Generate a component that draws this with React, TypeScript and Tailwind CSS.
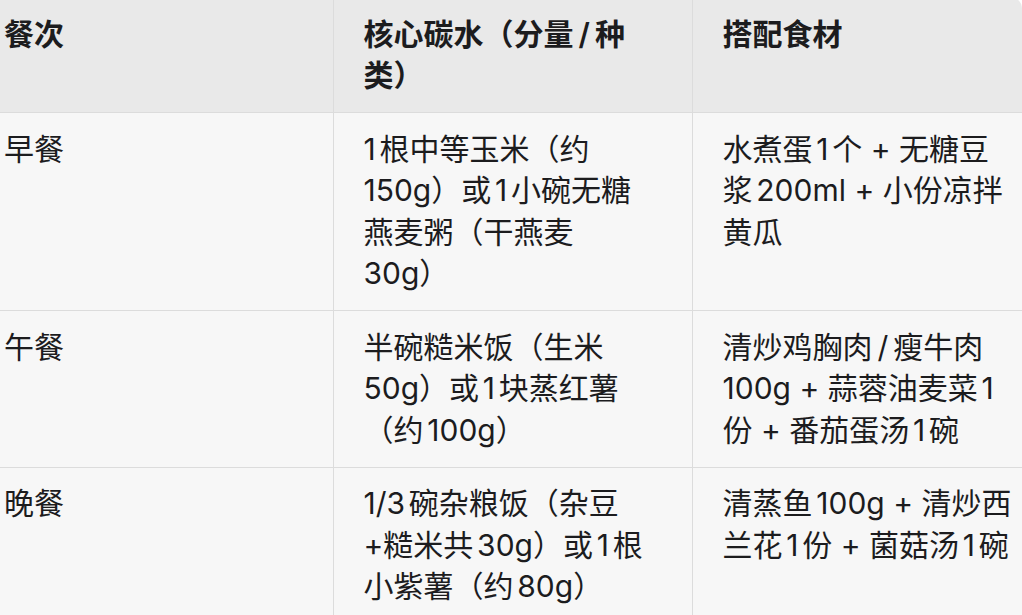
import { Fragment } from 'react';

const rows = [
  {
    meal: '早餐',
    carb: '1根中等玉米（约150g）或1小碗无糖燕麦粥（干燕麦30g）',
    side: '水煮蛋1个 + 无糖豆浆200ml + 小份凉拌黄瓜',
  },
  {
    meal: '午餐',
    carb: '半碗糙米饭（生米50g）或1块蒸红薯（约100g）',
    side: '清炒鸡胸肉/瘦牛肉100g + 蒜蓉油麦菜1份 + 番茄蛋汤1碗',
  },
  {
    meal: '晚餐',
    carb: '1/3碗杂粮饭（杂豆+糙米共30g）或1根小紫薯（约80g）',
    side: '清蒸鱼100g + 清炒西兰花1份 + 菌菇汤1碗',
  },
];

// slash between two hanzi gets a bit of breathing room, like the source font
function Txt({ s }: { s: string }) {
  const parts = s.split(/(?<=[\u4e00-\u9fff])\/(?=[\u4e00-\u9fff])/);
  return (
    <>
      {parts.map((p, i) => (
        <Fragment key={i}>
          {i > 0 && <span className="px-[5px]">/</span>}
          {p}
        </Fragment>
      ))}
    </>
  );
}

const cell = 'align-top pl-[30px] py-[15.5px] text-left';

export default function App() {
  return (
    <div className="min-h-[615px] w-[1022px] overflow-hidden bg-white">
      <div
        className="-mt-[2px] -ml-[26px] w-[1048px] overflow-hidden rounded-tr-[10px] bg-[#f7f7f7] text-[30px] leading-[41.5px] text-[#1c1c1e] [text-autospace:normal] [text-spacing-trim:space-all]"
        style={{ fontFamily: 'Inter, "Noto Sans CJK SC", sans-serif' }}
      >
        <table className="w-[1048px] table-fixed border-collapse">
          <colgroup>
            <col className="w-[359px]" />
            <col className="w-[359px]" />
            <col className="w-[330px]" />
          </colgroup>
          <thead>
            <tr className="bg-[#e9e9e9] font-semibold">
              <th className={`${cell} pr-[30px] font-semibold`}>餐次</th>
              <th className={`${cell} pr-[41px] font-semibold border-l border-[#dcdcdc]`}><Txt s="核心碳水（分量/种类）" /></th>
              <th className={`${cell} pr-[8px] font-semibold border-l border-[#dcdcdc]`}>搭配食材</th>
            </tr>
          </thead>
          <tbody>
            {rows.map(r => (
              <tr key={r.meal} className="border-t border-[#dcdcdc]">
                <td className={`${cell} pr-[30px]`}>{r.meal}</td>
                <td className={`${cell} pr-[41px] border-l border-[#dcdcdc]`}><Txt s={r.carb} /></td>
                <td className={`${cell} pr-[8px] border-l border-[#dcdcdc]`}><Txt s={r.side} /></td>
              </tr>
            ))}
          </tbody>
        </table>
      </div>
    </div>
  );
}
